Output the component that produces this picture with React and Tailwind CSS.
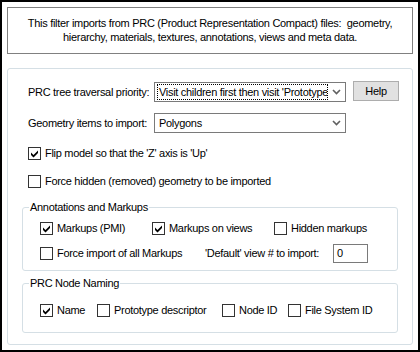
const CHECK_PATH = 'M2 4.5 L4.5 7 L9 2.5 L9 5 L4.5 9.5 L2 7 Z';

function Checkbox({ checked }) {
  return (
    <div className="w-[13px] h-[13px] shrink-0 border border-[#333333] bg-white flex items-center justify-center">
      {checked && (
        <svg width="11" height="11" viewBox="0 0 11 11">
          <path d={CHECK_PATH} fill="#000" />
        </svg>
      )}
    </div>
  );
}

function CheckItem({ checked, label, className = '' }) {
  return (
    <div className={'flex items-center gap-[4px] whitespace-nowrap ' + className}>
      <Checkbox checked={checked} />
      <span>{label}</span>
    </div>
  );
}

function Chevron() {
  return (
    <div className="w-[17px] h-full flex items-center justify-center shrink-0">
      <svg width="9" height="6" viewBox="0 0 9 6">
        <polyline points="1,1 4.5,4.5 8,1" fill="none" stroke="#606060" strokeWidth="1.6" />
      </svg>
    </div>
  );
}

function Group({ title, className = '', children }) {
  return (
    <div className={'relative mx-[14px] border border-[#d5dfe5] rounded-[3px] ' + className}>
      <span className="absolute -top-[7px] left-[6px] bg-white px-[1px] leading-[13px]">{title}</span>
      {children}
    </div>
  );
}

export default function App() {
  return (
    <div className="w-[420px] h-[352px] border-2 border-black bg-white p-[5px] text-[11px] leading-[13px] tracking-[-0.3px] text-black font-['Liberation_Sans',Arial,sans-serif]">
      <div className="h-[47px] border border-[#808080] pt-[8px] text-center leading-[14px]">
        <p>This filter imports from PRC (Product Representation Compact) files:&nbsp; geometry,</p>
        <p>hierarchy, materials, textures, annotations, views and meta data.</p>
      </div>

      <div className="mt-[14px] h-[277px] border border-[#d5dfe5] rounded-[3px] flex flex-col">
        <div className="flex items-center h-[20px] mt-[13px] ml-[20px]">
          <span className="w-[126px] shrink-0">PRC tree traversal priority:</span>
          <div className="w-[192px] h-[20px] border border-[#7a7a7a] flex items-center">
            <div className="flex-1 min-w-0 ml-[2px] h-[16px] border border-dotted border-black overflow-hidden whitespace-nowrap px-[1px] leading-[14px]">
              Visit children first then visit 'Prototype' first
            </div>
            <Chevron />
          </div>
          <button className="ml-[7px] w-[46px] h-[20px] bg-[#e1e1e1] border border-[#adadad] -mt-[2px]">Help</button>
        </div>

        <div className="flex items-center h-[20px] mt-[11px] ml-[20px]">
          <span className="w-[126px] shrink-0">Geometry items to import:</span>
          <div className="w-[192px] h-[20px] border border-[#7a7a7a] flex items-center">
            <div className="flex-1 min-w-0 pl-[4px] whitespace-nowrap">Polygons</div>
            <Chevron />
          </div>
        </div>

        <CheckItem checked label="Flip model so that the 'Z' axis is 'Up'" className="h-[13px] mt-[14px] ml-[20px]" />
        <CheckItem label="Force hidden (removed) geometry to be imported" className="h-[13px] mt-[15px] ml-[20px]" />

        <Group title="Annotations and Markups" className="h-[64px] mt-[19px]">
          <div className="flex items-center h-[13px] mt-[14px] pl-[17px]">
            <CheckItem checked label="Markups (PMI)" className="w-[112px]" />
            <CheckItem checked label="Markups on views" className="w-[122px]" />
            <CheckItem label="Hidden markups" />
          </div>
          <div className="flex items-center h-[19px] mt-[9px] pl-[17px]">
            <CheckItem label="Force import of all Markups" className="w-[165px]" />
            <span className="w-[128px] shrink-0 whitespace-nowrap">'Default' view # to import:</span>
            <div className="w-[35px] h-[19px] border border-[#7a7a7a] pl-[3px] leading-[17px]">0</div>
          </div>
        </Group>

        <Group title="PRC Node Naming" className="h-[50px] mt-[12px]">
          <div className="flex items-center h-[13px] mt-[20px] pl-[17px]">
            <CheckItem checked label="Name" className="w-[57px]" />
            <CheckItem label="Prototype descriptor" className="w-[125px]" />
            <CheckItem label="Node ID" className="w-[66px]" />
            <CheckItem label="File System ID" />
          </div>
        </Group>
      </div>
    </div>
  );
}
